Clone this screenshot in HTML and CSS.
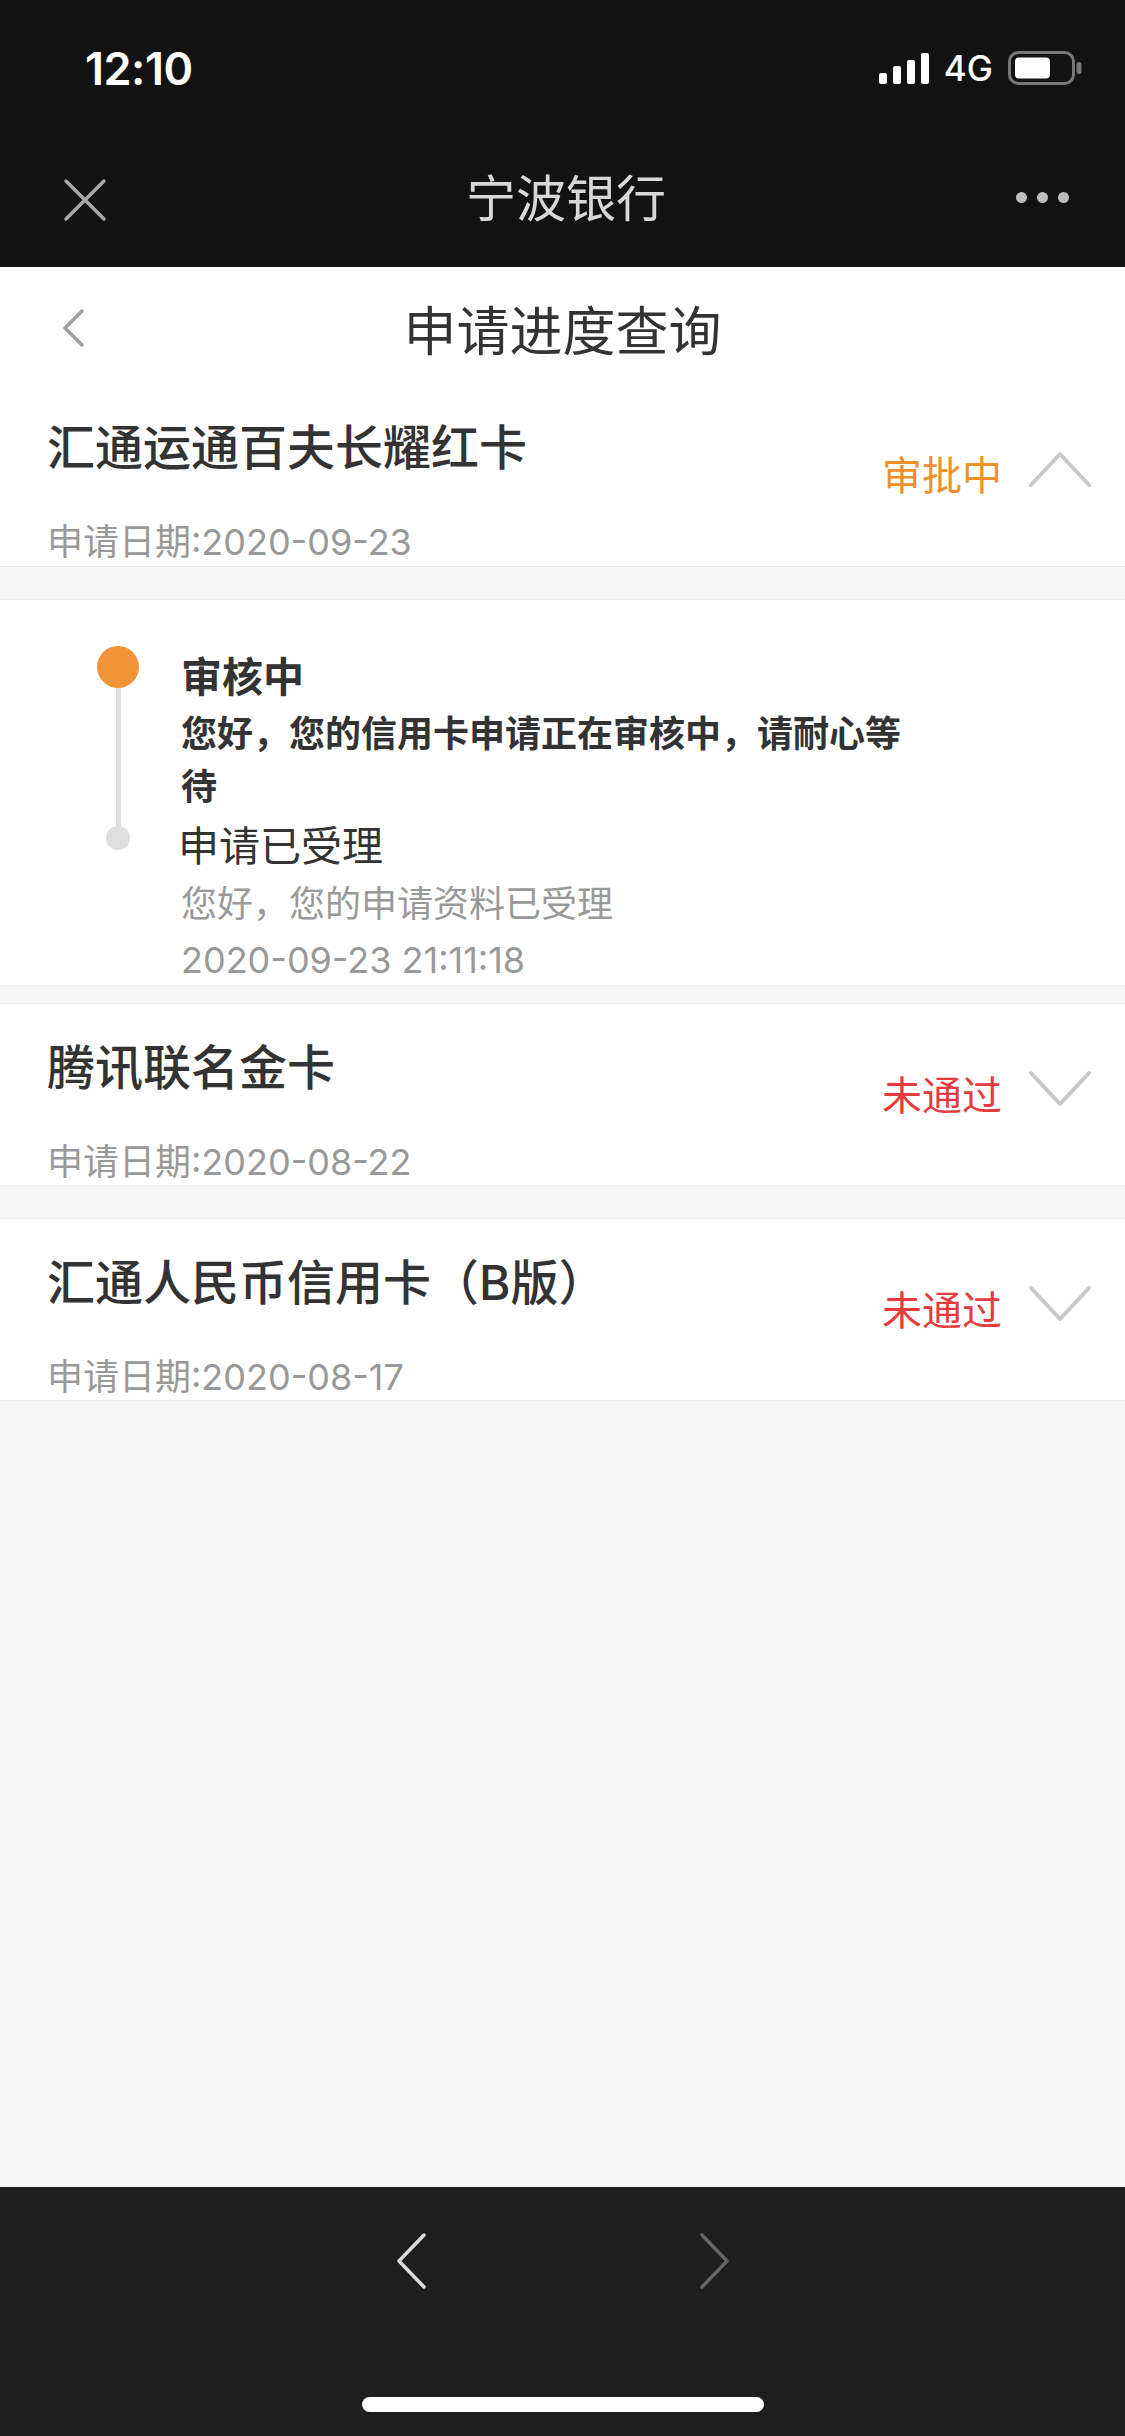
FILE: index.html
```html
<!DOCTYPE html>
<html lang="zh-CN">
<head>
    <meta charset="UTF-8">
    <meta name="viewport" content="width=device-width, initial-scale=1.0">
    <title>申请进度查询</title>
    <link rel="stylesheet" href="styles.css">
</head>
<body>

<div class="screen">
    <div class="top">
        <div class="status">
            <span class="time">12:10</span>
            <div class="status-icons">
                <div class="signal"><span></span><span></span><span></span><span></span></div>
                <span class="net">4G</span>
                <svg class="battery" width="74" height="34" viewBox="0 0 74 34">
                    <rect x="1.5" y="1.5" width="64" height="31" rx="9" fill="none" stroke="#777" stroke-width="3"/>
                    <rect x="7" y="6.5" width="35" height="21" rx="4" fill="#fff"/>
                    <rect x="68.5" y="11" width="5" height="12" rx="2.5" fill="#777"/>
                </svg>
            </div>
        </div>
        <div class="navbar">
            <svg class="nav-close" width="44" height="44" viewBox="0 0 44 44">
                <path d="M3 3 L41 41 M41 3 L3 41" stroke="#a9a9a9" stroke-width="3.5" stroke-linecap="round"/>
            </svg>
            <span class="nav-title">宁波银行</span>
            <div class="nav-more"><span></span><span></span><span></span></div>
        </div>
    </div>

    <div class="content">
        <div class="page-head">
            <svg class="back" width="24" height="40" viewBox="0 0 24 40">
                <path d="M21 3 L4 20 L21 37" fill="none" stroke="#a0a0a0" stroke-width="3.5" stroke-linecap="round" stroke-linejoin="round"/>
            </svg>
            <h1>申请进度查询</h1>
        </div>

        <div class="card">
            <div class="card-info">
                <div class="card-name">汇通运通百夫长耀红卡</div>
                <div class="card-date">申请日期:2020-09-23</div>
            </div>
            <div class="card-state">
                <span class="state pending">审批中</span>
                <svg class="arrow" width="64" height="38" viewBox="0 0 64 38">
                    <path d="M3 35 L32 4 L61 35" fill="none" stroke="#c8c8c8" stroke-width="4" stroke-linecap="round" stroke-linejoin="round"/>
                </svg>
            </div>
        </div>

        <div class="timeline">
            <div class="tl-item">
                <div class="tl-mark">
                    <span class="tl-dot active"></span>
                    <span class="tl-line"></span>
                </div>
                <div class="tl-body">
                    <div class="tl-title strong">审核中</div>
                    <div class="tl-desc strong">您好，您的信用卡申请正在审核中，请耐心等待</div>
                </div>
            </div>
            <div class="tl-item">
                <div class="tl-mark">
                    <span class="tl-dot"></span>
                </div>
                <div class="tl-body">
                    <div class="tl-title">申请已受理</div>
                    <div class="tl-desc">您好，您的申请资料已受理</div>
                    <div class="tl-desc tl-time">2020-09-23 21:11:18</div>
                </div>
            </div>
        </div>

        <div class="card card-sep-small">
            <div class="card-info">
                <div class="card-name">腾讯联名金卡</div>
                <div class="card-date">申请日期:2020-08-22</div>
            </div>
            <div class="card-state">
                <span class="state rejected">未通过</span>
                <svg class="arrow" width="64" height="38" viewBox="0 0 64 38">
                    <path d="M3 3 L32 34 L61 3" fill="none" stroke="#c8c8c8" stroke-width="4" stroke-linecap="round" stroke-linejoin="round"/>
                </svg>
            </div>
        </div>

        <div class="card card-sep">
            <div class="card-info">
                <div class="card-name">汇通人民币信用卡（B版）</div>
                <div class="card-date">申请日期:2020-08-17</div>
            </div>
            <div class="card-state">
                <span class="state rejected">未通过</span>
                <svg class="arrow" width="64" height="38" viewBox="0 0 64 38">
                    <path d="M3 3 L32 34 L61 3" fill="none" stroke="#c8c8c8" stroke-width="4" stroke-linecap="round" stroke-linejoin="round"/>
                </svg>
            </div>
        </div>
    </div>

    <div class="bottom">
        <div class="bottom-nav">
            <svg width="32" height="56" viewBox="0 0 32 56">
                <path d="M28 2 L3 28 L28 54" fill="none" stroke="#dcdcdc" stroke-width="3.5" stroke-linecap="round" stroke-linejoin="round"/>
            </svg>
            <svg width="32" height="56" viewBox="0 0 32 56">
                <path d="M4 2 L29 28 L4 54" fill="none" stroke="#666" stroke-width="3.5" stroke-linecap="round" stroke-linejoin="round"/>
            </svg>
        </div>
        <div class="home-bar"></div>
    </div>
</div>

</body>
</html>
```

FILE: styles.css
```css
* { box-sizing: border-box; margin: 0; padding: 0; }
body { width: 1125px; height: 2436px; font-family: Inter, "Noto Sans CJK SC", sans-serif; background: #f6f6f6; color: #333; overflow: hidden; }
.screen { display: flex; flex-direction: column; height: 2436px; }

/* 顶部状态栏 + 导航 */
.top { background: #121212; height: 267px; }
.status { height: 136px; display: flex; align-items: center; justify-content: space-between; padding: 0 43px 0 85px; }
.time { font-weight: 600; font-size: 45px; color: #fff; letter-spacing: -0.5px; }
.status-icons { display: flex; align-items: center; gap: 15px; }
.signal { display: flex; align-items: flex-end; gap: 6px; height: 31px; }
.signal span { width: 8px; background: #fff; border-radius: 2px; }
.signal span:nth-child(1) { height: 11px; }
.signal span:nth-child(2) { height: 18px; }
.signal span:nth-child(3) { height: 24px; }
.signal span:nth-child(4) { height: 31px; }
.net { font-size: 35px; font-weight: 500; color: #fff; }
.navbar { height: 131px; display: grid; grid-template-columns: 1fr auto 1fr; align-items: center; padding: 0 56px 10px 63px; }
.nav-close { margin-top: 6px; }
.nav-title { font-size: 50px; color: #d8d8d8; margin-top: -4px; }
.nav-more { justify-self: end; display: flex; gap: 10px; margin-top: 2px; }
.nav-more span { width: 11px; height: 11px; border-radius: 50%; background: #bdbdbd; }

/* 内容区 */
.content { flex: 1; }
.page-head { height: 117px; background: #fff; display: grid; grid-template-columns: 1fr auto 1fr; align-items: center; padding: 4px 61px 0; }
.page-head h1 { font-size: 53px; font-weight: normal; color: #333; }
.back { margin-top: 0; }

.card { height: 183px; background: #fff; display: flex; justify-content: space-between; align-items: center; padding: 0 33px 0 47px; border-bottom: 1px solid #ececec; }
.card-sep { margin-top: 32px; border-top: 1px solid #ececec; }
.card-sep-small { margin-top: 17px; border-top: 1px solid #ececec; }
.card-info { align-self: flex-start; display: flex; flex-direction: column; padding-top: 34px; }
.card-name { font-size: 48px; font-weight: 500; line-height: 60px; color: #333; }
.card-date { font-size: 36px; line-height: 40px; color: #999; margin-top: 44px; }
.card-state { display: flex; align-items: center; gap: 26px; }
.state { font-size: 40px; line-height: 50px; margin-top: 2px; }
.pending { color: #f0902c; }
.rejected { color: #e63b3d; }
.arrow { margin-bottom: 12px; }

/* 进度时间线 */
.timeline { margin-top: 32px; background: #fff; padding: 46px 0 0 97px; height: 387px; border-top: 1px solid #ececec; border-bottom: 1px solid #ececec; }
.tl-item { display: flex; }
.tl-mark { width: 84px; flex-shrink: 0; display: flex; flex-direction: column; }
.tl-dot { width: 24px; height: 24px; border-radius: 50%; background: #dedede; margin: 12px 0 0 9px; }
.tl-dot.active { width: 42px; height: 42px; background: #f0943a; margin: 0; }
.tl-line { flex: 1; width: 5px; background: #dedede; margin: 0 0 -14px 19px; }
.tl-body { width: 740px; }
.tl-title { font-size: 41px; line-height: 62px; color: #333; }
.tl-item + .tl-item .tl-title { line-height: 64px; margin-left: -3px; }
.tl-desc { font-size: 36px; line-height: 53px; color: #999; }
.tl-time { margin-top: 3px; }
.strong { font-weight: bold; color: #333; }

/* 底部工具栏 */
.bottom { height: 249px; background: #1e1e1e; display: flex; flex-direction: column; align-items: center; }
.bottom-nav { display: flex; gap: 270px; margin-top: 46px; }
.home-bar { width: 402px; height: 15px; border-radius: 8px; background: #fff; margin-top: 108px; }
```
